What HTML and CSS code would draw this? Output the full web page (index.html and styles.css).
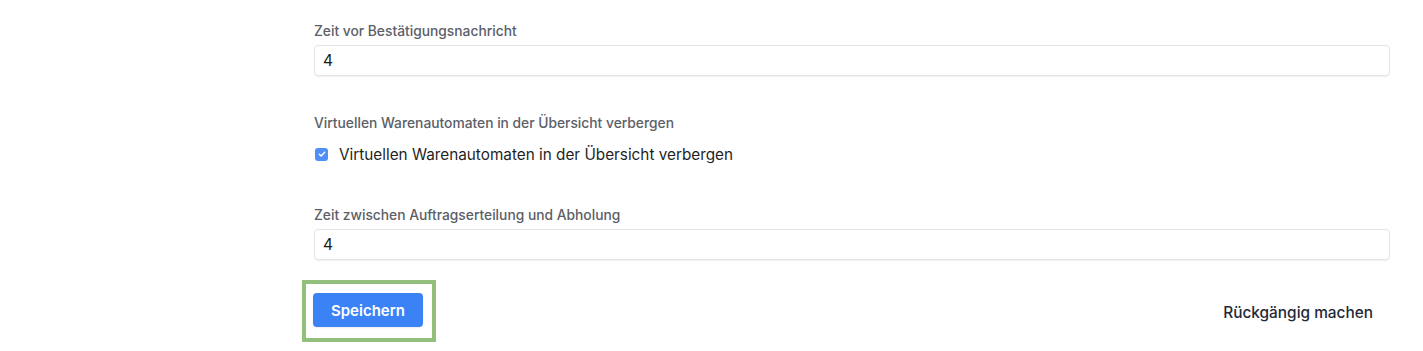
FILE: index.html
```html
<!DOCTYPE html>
<html lang="de">
<head>
<meta charset="utf-8">
<title>Einstellungen</title>
<link rel="stylesheet" href="styles.css">
</head>
<body>
<main class="page">
  <form class="form">
    <div class="field field-first">
      <label class="label" for="f1">Zeit vor Bestätigungsnachricht</label>
      <input class="input" id="f1" type="text" value="4">
    </div>
    <div class="field field-check">
      <span class="label">Virtuellen Warenautomaten in der Übersicht verbergen</span>
      <label class="check-row">
        <span class="checkbox">
          <svg viewBox="0 0 12 12" width="12" height="12"><path d="M3.3 6.2 L5.1 7.9 L8.7 4.3" fill="none" stroke="#fff" stroke-width="1.4" stroke-linecap="round" stroke-linejoin="round"/></svg>
        </span>
        <span class="check-text">Virtuellen Warenautomaten in der Übersicht verbergen</span>
      </label>
    </div>
    <div class="field field-third">
      <label class="label" for="f3">Zeit zwischen Auftragserteilung und Abholung</label>
      <input class="input" id="f3" type="text" value="4">
    </div>
    <div class="actions">
      <div class="highlight">
        <button type="button" class="btn-primary">Speichern</button>
      </div>
      <button type="button" class="btn-link">Rückgängig machen</button>
    </div>
  </form>
</main>
</body>
</html>
```

FILE: styles.css
```css
* { box-sizing: border-box; }
html, body { margin: 0; padding: 0; background: #fff; }
body {
  font-family: Inter, "Noto Sans", "Liberation Sans", sans-serif;
  color: #111827;
}
.page {
  padding: 21px 33px 0 314px;
}
.form {
  display: flex;
  flex-direction: column;
}
.field {
  display: flex;
  flex-direction: column;
}
.label {
  font-size: 13.8px;
  line-height: 20px;
  font-weight: 500;
  color: #5b6068;
  margin-bottom: 4px;
}
.input {
  height: 31px;
  width: 100%;
  border: 1px solid #e3e4e6;
  border-radius: 4px;
  box-shadow: 0 1px 2px rgba(0,0,0,0.06);
  padding: 0 8px;
  font-family: inherit;
  font-size: 15.5px;
  color: #1a1a1a;
  outline: none;
}
.field-check {
  margin-top: 37px;
}
.check-row {
  display: flex;
  align-items: center;
  gap: 11px;
  height: 24px;
  margin-top: 5px;
  padding-left: 1px;
}
.checkbox {
  width: 13px;
  height: 13px;
  border-radius: 3px;
  background: #4f8ff7;
  display: flex;
  align-items: center;
  justify-content: center;
}
.check-text {
  font-size: 15.3px;
  color: #1f1f1f;
}
.field-third {
  margin-top: 39px;
}
.actions {
  margin-top: 20px;
  display: flex;
  justify-content: space-between;
  align-items: center;
}
.highlight {
  border: 4px solid #92bf7b;
  padding: 9px 9px 11px 7px;
  margin-left: -12px;
}
.btn-primary {
  display: block;
  width: 110px;
  height: 34px;
  border: 0;
  border-radius: 4px;
  background: #3b82f6;
  color: #fff;
  font-family: inherit;
  font-size: 15px;
  font-weight: 600;
  box-shadow: 0 1px 2px rgba(0,0,0,0.08);
}
.btn-link {
  border: 0;
  background: none;
  font-family: inherit;
  font-size: 15.4px;
  font-weight: 500;
  color: #1f2937;
  padding: 0 17px 0 0;
  margin-top: 2px;
}
```
